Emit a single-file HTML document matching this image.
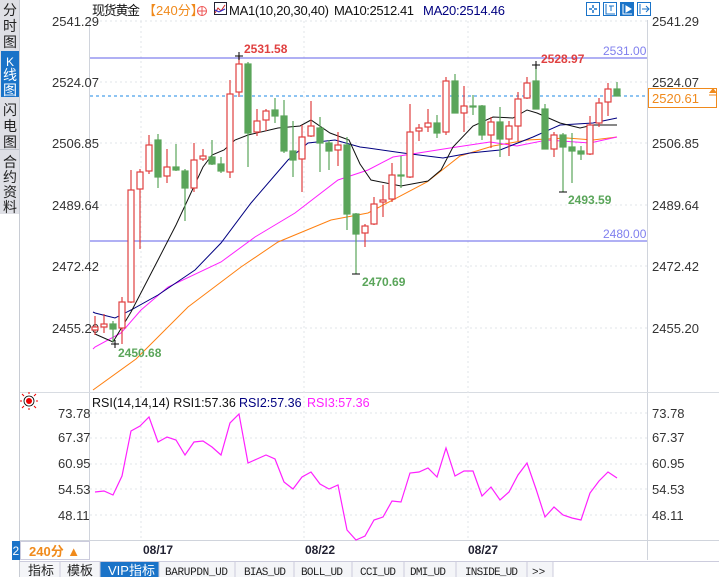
<!DOCTYPE html>
<html><head><meta charset="utf-8"><style>
body{margin:0;width:719px;height:577px;overflow:hidden;background:#fff;font-family:"Liberation Sans","Noto Sans CJK SC",sans-serif}
svg{position:absolute;left:0;top:0}
</style></head><body>
<svg width="719" height="577" viewBox="0 0 719 577" font-family="Liberation Sans, Noto Sans CJK SC, sans-serif">
<rect x="0" y="0" width="19" height="214" fill="#dfe0e6"/>
<rect x="1" y="51" width="18" height="46" fill="#1a73c8"/>
<line x1="19.5" y1="0" x2="19.5" y2="577" stroke="#c8ccd4"/>
<g font-size="14" fill="#222" text-anchor="middle">
<text x="10" y="15">分</text><text x="10" y="31">时</text><text x="10" y="47">图</text>
<text x="10" y="66" fill="#fff" font-size="12">K</text><text x="10" y="80" fill="#fff">线</text><text x="10" y="95" fill="#fff">图</text>
<text x="10" y="115">闪</text><text x="10" y="131">电</text><text x="10" y="147">图</text>
<text x="10" y="167">合</text><text x="10" y="182">约</text><text x="10" y="197">资</text><text x="10" y="212">料</text>
</g>
<line x1="0" y1="149.5" x2="19" y2="149.5" stroke="#c0c4cc"/>
<line x1="89.5" y1="20" x2="89.5" y2="540" stroke="#d0d4dc"/>
<line x1="647.5" y1="20" x2="647.5" y2="560" stroke="#d0d4dc"/>
<line x1="20" y1="392.5" x2="719" y2="392.5" stroke="#d8dce2"/>
<line x1="20" y1="540.5" x2="719" y2="540.5" stroke="#d0d4dc"/>
<g stroke="#e2e4e8" stroke-dasharray="2,3">
<line x1="90" y1="21" x2="647" y2="21"/><line x1="90" y1="82" x2="647" y2="82"/><line x1="90" y1="143" x2="647" y2="143"/><line x1="90" y1="205" x2="647" y2="205"/><line x1="90" y1="266" x2="647" y2="266"/><line x1="90" y1="328" x2="647" y2="328"/>
<line x1="90" y1="413" x2="647" y2="413"/><line x1="90" y1="438" x2="647" y2="438"/><line x1="90" y1="464" x2="647" y2="464"/><line x1="90" y1="489" x2="647" y2="489"/><line x1="90" y1="515" x2="647" y2="515"/>
<line x1="141" y1="21" x2="141" y2="540"/><line x1="304" y1="21" x2="304" y2="540"/><line x1="468" y1="21" x2="468" y2="540"/>
</g>
<g font-size="13" fill="#333">
<text x="52" y="26">2541.29</text><text x="52" y="87">2524.07</text><text x="52" y="148">2506.85</text><text x="52" y="210">2489.64</text><text x="52" y="271">2472.42</text><text x="52" y="333">2455.20</text>
<text x="58" y="418">73.78</text><text x="58" y="442">67.37</text><text x="58" y="468">60.95</text><text x="58" y="494">54.53</text><text x="58" y="520">48.11</text>
<text x="652" y="26">2541.29</text><text x="652" y="87">2524.07</text><text x="652" y="148">2506.85</text><text x="652" y="210">2489.64</text><text x="652" y="271">2472.42</text><text x="652" y="333">2455.20</text>
<text x="652" y="418">73.78</text><text x="652" y="442">67.37</text><text x="652" y="468">60.95</text><text x="652" y="494">54.53</text><text x="652" y="520">48.11</text>
</g>
<text x="92" y="15" font-size="13" fill="#111" textLength="48">现货黄金</text>
<text x="143" y="15" font-size="13" fill="#f08a1c">【240分】</text>
<circle cx="202" cy="11" r="4.5" fill="none" stroke="#e55" stroke-width="1"/><line x1="197" y1="11" x2="207" y2="11" stroke="#e55"/><line x1="202" y1="6" x2="202" y2="16" stroke="#e55"/>
<rect x="214.5" y="2.5" width="12" height="12" fill="#fff" stroke="#223" stroke-width="1"/><polyline points="215,13 218,8 221,11 225,5" fill="none" stroke="#c22"/><polyline points="215,10 219,12 225,9" fill="none" stroke="#22c"/>
<text x="229" y="15" font-size="13" fill="#111" textLength="100">MA1(10,20,30,40)</text>
<text x="334" y="15" font-size="13" fill="#111" textLength="80">MA10:2512.41</text>
<text x="423" y="15" font-size="13" fill="#000080" textLength="82">MA20:2514.46</text>
<g stroke="#1a73c8" fill="none">
<rect x="586.5" y="2.5" width="13" height="13"/><rect x="603.5" y="2.5" width="13" height="13"/><rect x="620.5" y="2.5" width="13" height="13" fill="#1a73c8"/><rect x="637.5" y="2.5" width="13" height="13"/>
<path d="M593 5v3M593 10v3M589 9h3M594 9h3" stroke-width="1.5"/>
<path d="M606 4v10h9M609 6h5M611 6v5" /><path d="M623 4v10h9" stroke="#fff"/><path d="M626 6l5 3-5 3z" fill="#fff" stroke="#fff"/>
<path d="M640 4v10M642 9h7M646 6l3 3-3 3"/>
</g>
<line x1="90" y1="58" x2="647" y2="58" stroke="#8080ee" stroke-width="1.2"/>
<line x1="90" y1="241" x2="647" y2="241" stroke="#8080ee" stroke-width="1.2"/>
<line x1="90" y1="96" x2="647" y2="96" stroke="#1e8ae6" stroke-dasharray="3,3"/>
<text x="603" y="55" font-size="12" fill="#8080ee">2531.00</text>
<text x="603" y="238" font-size="12" fill="#8080ee">2480.00</text>
<rect x="648.5" y="88.5" width="68" height="19" fill="#fff" stroke="#f08a1c"/>
<text x="652" y="103" font-size="13" fill="#f08a1c">2520.61</text>
<path d="M709 93l4-5 4 5z" fill="#f08a1c"/><line x1="709" y1="95" x2="717" y2="95" stroke="#f08a1c"/>
<polyline fill="none" stroke="#ff8010" points="93,390 136,359 188,307 241,267 278,242 331,220 368,213 427,182 460,156 493,146 527,140 567,138 593,140 617,137"/>
<polyline fill="none" stroke="#ff20ff" points="93,349 95,347 121,333 141,310 168,287 221,262 255,237 295,213 338,180 368,170 393,157 450,148 490,142 517,146 547,140 590,143 617,137"/>
<polyline fill="none" stroke="#000080" points="93,312 95,313 115,318 131,310 158,295 195,270 221,243 251,203 288,160 308,143 335,140 360,147 368,148 403,153 443,158 470,153 500,150 533,137 560,125 593,123 617,118"/>
<polyline fill="none" stroke="#111" points="95,334 113,342 131,312 158,260 176,225 203,167 212,155 224,150 235,140 248,135 278,128 300,126 311,120 330,133 349,140 360,164 371,180 401,186 428,181 441,170 453,147 473,126 493,117 513,118 527,110 537,113 560,123 580,128 593,125 617,125"/>
<g stroke-width="1.2">
<g stroke="#e04040" fill="#fff">
<path d="M95 316v19M104 314v19M122 297v47M131 170v133M140 169v80M149 135v39M167 149v34M194 143v49M203 149v12M230 80v98M239 56v41M257 109v27M266 109v22M302 125v67M311 101v36M338 132v34M365 224v23M374 197v28M383 185v32M392 163v39M410 104v74M419 124v17M428 109v23M446 77v58M464 86v46M491 117v31M509 121v35M518 92v49M527 77v22M554 132v25M590 116v39M599 98v29M608 83v33"/>
<g transform="translate(1,0)">
<rect x="91" y="327" width="6" height="3"/><rect x="100" y="324" width="6" height="3"/><rect x="118" y="302" width="6" height="26"/><rect x="127" y="190" width="6" height="112"/><rect x="136" y="172" width="6" height="17"/><rect x="145" y="145" width="6" height="26"/><rect x="163" y="167" width="6" height="9"/><rect x="190" y="160" width="6" height="28"/><rect x="199" y="156" width="6" height="3"/><rect x="226" y="94" width="6" height="78"/><rect x="235" y="64" width="6" height="28"/><rect x="253" y="121" width="6" height="11"/><rect x="262" y="111" width="6" height="9"/><rect x="298" y="137" width="6" height="22"/><rect x="307" y="126" width="6" height="10"/><rect x="334" y="145" width="6" height="5"/><rect x="361" y="226" width="6" height="7"/><rect x="370" y="204" width="6" height="20"/><rect x="379" y="200" width="6" height="2"/><rect x="388" y="175" width="6" height="24"/><rect x="406" y="132" width="6" height="45"/><rect x="415" y="128" width="6" height="3"/><rect x="424" y="123" width="6" height="4"/><rect x="442" y="81" width="6" height="51"/><rect x="460" y="106" width="6" height="7"/><rect x="487" y="122" width="6" height="13"/><rect x="505" y="126" width="6" height="13"/><rect x="514" y="99" width="6" height="27"/><rect x="523" y="83" width="6" height="15"/><rect x="550" y="135" width="6" height="14"/><rect x="586" y="125" width="6" height="29"/><rect x="595" y="103" width="6" height="20"/><rect x="604" y="89" width="6" height="13"/>
</g></g>
<g stroke="#5aa55a" fill="#5aa55a">
<path d="M113 321v21M158 134v54M176 144v27M185 169v52M212 140v25M221 157v16M248 62v105M275 98v25M284 100v53M293 121v56M320 117v55M329 140v30M347 137v93M356 213v61M401 156v32M437 115v23M455 74v39M473 95v20M482 105v35M500 107v50M536 66v43M545 104v45M563 133v59M572 133v50M581 146v14M617 82v14"/>
<g transform="translate(1,0)">
<rect x="109" y="324" width="6" height="5"/><rect x="154" y="140" width="6" height="37"/><rect x="172" y="167" width="6" height="3"/><rect x="181" y="171" width="6" height="17"/><rect x="208" y="157" width="6" height="7"/><rect x="217" y="164" width="6" height="7"/><rect x="244" y="64" width="6" height="69"/><rect x="271" y="110" width="6" height="6"/><rect x="280" y="116" width="6" height="35"/><rect x="289" y="151" width="6" height="9"/><rect x="316" y="128" width="6" height="15"/><rect x="325" y="143" width="6" height="8"/><rect x="343" y="145" width="6" height="69"/><rect x="352" y="214" width="6" height="20"/><rect x="397" y="175" width="6" height="1"/><rect x="433" y="123" width="6" height="10"/><rect x="451" y="81" width="6" height="32"/><rect x="469" y="106" width="6" height="1"/><rect x="478" y="106" width="6" height="29"/><rect x="496" y="122" width="6" height="17"/><rect x="532" y="81" width="6" height="28"/><rect x="541" y="109" width="6" height="40"/><rect x="559" y="135" width="6" height="12"/><rect x="568" y="147" width="6" height="4"/><rect x="577" y="151" width="6" height="3"/><rect x="613" y="89" width="6" height="7"/>
</g></g>
</g>
<g stroke="#000"><path d="M235 56h8M239 52v8M532 65h8M536 61v8M352 274h8M111 344h8M115 340v8M559 192h8"/></g>
<g font-size="12" font-weight="bold">
<text x="244" y="53" fill="#e04040">2531.58</text>
<text x="541" y="63" fill="#e04040">2528.97</text>
<text x="362" y="286" fill="#5aa55a">2470.69</text>
<text x="568" y="204" fill="#5aa55a">2493.59</text>
<text x="118" y="357" fill="#5aa55a">2450.68</text>
</g>
<circle cx="29" cy="401" r="3" fill="#e00"/><circle cx="29" cy="401" r="5" fill="none" stroke="#000" stroke-width="0.8"/>
<path d="M22 401h-2M36 401h2M29 394v-2M29 408v2M24 396l-2-2M34 396l2-2M24 406l-2 2M34 406l2 2" stroke="#e00"/>
<text x="92" y="407" font-size="12.5" fill="#111">RSI(14,14,14) RSI1:57.36</text>
<text x="239" y="407" font-size="12.5" fill="#000080">RSI2:57.36</text>
<text x="307" y="407" font-size="12.5" fill="#ff20ff">RSI3:57.36</text>
<polyline fill="none" stroke="#ff20ff" stroke-width="1.2" points="95,492 104,491 113,495 122,476 131,431 140,426 149,417 158,442 167,437 176,440 185,455 194,442 203,441 212,447 221,455 230,423 239,414 248,463 257,459 266,455 275,459 284,482 293,489 302,477 311,472 320,484 329,489 338,485 347,530 356,540 365,536 374,520 383,517 392,501 401,502 410,473 419,472 428,468 437,477 446,448 455,476 464,471 473,471 482,496 491,487 500,500 509,492 518,475 527,463 536,489 545,517 554,507 563,515 572,518 581,520 590,493 599,481 608,472 617,478"/>
<rect x="12" y="541" width="8" height="19" fill="#1a73c8"/><text x="12.5" y="555" font-size="12" fill="#fff">2</text>
<rect x="20.5" y="541.5" width="69" height="18" fill="#fff" stroke="#ccd"/>
<text x="29" y="556" font-size="13" font-weight="bold" fill="#f08a1c">240分 ▲</text>
<g font-size="12" font-weight="bold" fill="#223"><text x="143" y="554">08/17</text><text x="305" y="554">08/22</text><text x="468" y="554">08/27</text></g>
<line x1="20" y1="561.5" x2="719" y2="561.5" stroke="#ccd"/>
<rect x="20" y="562" width="533" height="15" fill="#f4f5f8"/>
<rect x="100" y="562" width="59" height="15" fill="#1a73c8"/>
<g font-size="13" fill="#222">
<text x="28" y="575">指标</text><text x="67" y="575">模板</text><text x="108" y="575" fill="#fff">VIP指标</text>
</g>
<g font-size="11" fill="#222" font-family="Liberation Mono, monospace">
<text x="165" y="575" textLength="63">BARUPDN_UD</text><text x="244" y="575" textLength="42">BIAS_UD</text><text x="301" y="575" textLength="42">BOLL_UD</text><text x="360" y="575" textLength="36">CCI_UD</text><text x="410" y="575" textLength="36">DMI_UD</text><text x="465" y="575" textLength="53">INSIDE_UD</text><text x="532" y="575">&gt;&gt;</text>
</g>
<g stroke="#ccd"><path d="M60 562v15M100 562v15M159 562v15M235 562v15M294 562v15M352 562v15M404 562v15M456 562v15M527 562v15M553 562v15"/></g>
</svg>
</body></html>
